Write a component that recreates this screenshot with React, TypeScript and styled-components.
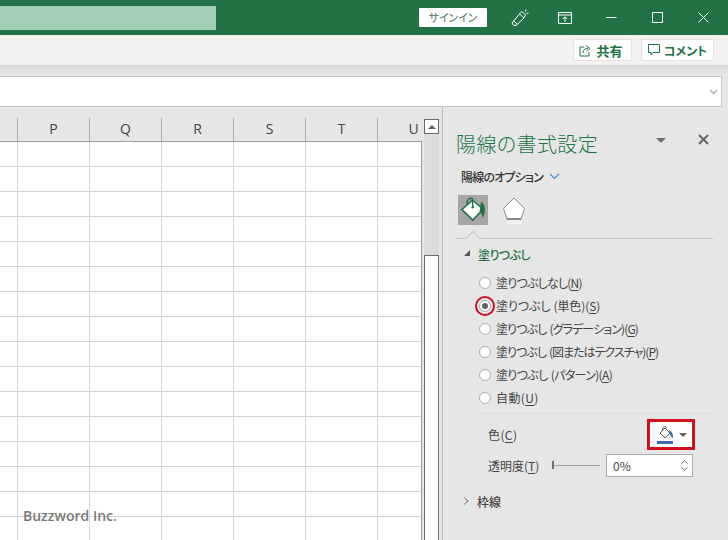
import React from "react";
import styled, { createGlobalStyle } from "styled-components";

const Global = createGlobalStyle`
  html, body { margin: 0; padding: 0; background: #e6e6e6; }
  * { box-sizing: border-box; }
  body { font-family: "Noto Sans CJK JP", "Noto Sans", sans-serif; font-feature-settings: "palt"; }
`;

const Page = styled.div`
  position: relative; width: 728px; height: 540px; overflow: hidden;
  display: flex; flex-direction: column; background: #e6e6e6; color: #444;
`;
const TitleBar = styled.div`
  height: 35px; flex: none; background: #217346; display: flex; align-items: flex-start;
`;
const SearchBox = styled.div`width: 216px; height: 24px; margin-top: 6px; background: #a3cfb4;`;
const SignIn = styled.div`
  width: 68px; height: 19px; margin: 8px 0 0 203px; background: #fff; border-radius: 1px;
  font-size: 11px; line-height: 19px; text-align: center; color: #4a7560; letter-spacing: -.1px;
`;
const WinIcon = styled.div<{ $w: number; $pad?: number }>`
  width: ${p => p.$w}px; height: 35px; flex: none; display: flex; align-items: center; justify-content: center;
  padding-left: ${p => p.$pad ?? 0}px;
`;
const RibbonBar = styled.div`
  height: 30px; flex: none; background: #f3f2f1; display: flex; justify-content: flex-end; align-items: flex-start;
  padding: 4px 14px 0 0; gap: 9px;
`;
const RibbonButton = styled.div<{ $w: number; $size: number; $pr?: number }>`
  width: ${p => p.$w}px; height: 22px; background: #fff; border: 1px solid #e4e3e2; border-radius: 2px;
  display: flex; align-items: center; justify-content: center; gap: 4px;
  font-size: ${p => p.$size}px; font-weight: 700; color: #217346; padding-right: ${p => p.$pr ?? 0}px;
  white-space: nowrap;
`;
const Shadow = styled.div`
  height: 11px; flex: none; background: linear-gradient(#d6d6d6, #e6e6e6 80%);
`;
const FormulaBar = styled.div`
  height: 31px; flex: none; background: #fff; margin-right: 6px;
  border-top: 1px solid #c6c6c6; border-bottom: 1px solid #c6c6c6; border-right: 1px solid #c6c6c6;
  display: flex; align-items: center; justify-content: flex-end; padding-right: 3px;
`;
const Main = styled.div`flex: 1; display: flex; min-height: 0;`;
const Sheet = styled.div`width: 422px; flex: none; padding-top: 11px; overflow: hidden;`;
const HeadRow = styled.div`display: flex; height: 23px; overflow: hidden;`;
const ColHead = styled.div<{ $w: number }>`
  width: ${p => p.$w}px; flex: none; text-align: center; border-right: 1px solid #ababab;
  font-family: "Open Sans", sans-serif; font-size: 14px; line-height: 22px; color: #444;
`;
const Grid = styled.div`
  display: grid; grid-template-columns: 18px repeat(5, 72px) 43px; grid-auto-rows: 25px;
  background: #fff; border-top: 1px solid #9c9c9c; border-right: 1px solid #9c9c9c; height: 410px; overflow: hidden;
  width: 422px;
`;
const Cell = styled.div`border-right: 1px solid #d4d4d4; border-bottom: 1px solid #d4d4d4;`;
const LastCell = styled.div`border-bottom: 1px solid #d4d4d4;`;
const Scrollbar = styled.div`
  width: 15px; flex: none; margin: 12px 0 0 2px; background: #dcdcdc; display: flex; flex-direction: column;
  justify-content: space-between;
`;
const ScrollBtn = styled.div`
  height: 15px; background: #fff; border: 1px solid #6a6a6a; display: flex; align-items: center; justify-content: center;
`;
const UpTri = styled.div`
  width: 0; height: 0; border-left: 4px solid transparent; border-right: 4px solid transparent; border-bottom: 4px solid #606060;
`;
const Thumb = styled.div`height: 285px; background: #fff; border: 1px solid #6a6a6a; border-bottom: 0;`;
const Pane = styled.div`
  margin-left: 3px; flex: 1; border-left: 1px solid #b8b8b8; background: #e6e6e6; display: flex; flex-direction: column;
  padding: 22px 0 0 13px;
`;
const PaneHead = styled.div`display: flex; align-items: center; height: 30px; padding-right: 19px;`;
const PaneTitle = styled.div`
  font-size: 20px; font-weight: 300; color: #217346; line-height: 30px; letter-spacing: .4px; flex: 1; white-space: nowrap;
`;
const MenuTri = styled.div`
  width: 0; height: 0; border-left: 5px solid transparent; border-right: 5px solid transparent;
  border-top: 5px solid #6f6f6f; margin-right: 32px; margin-top: -8px;
`;
const CloseWrap = styled.div`margin-top: -9px; height: 12px; display: flex;`;
const OptionRow = styled.div`
  display: flex; align-items: center; gap: 6px; margin: 9px 0 0 5px; height: 17px; font-size: 12px; font-weight: 500; color: #333;
  letter-spacing: -.8px;
`;
const IconRow = styled.div`display: flex; align-items: center; margin: 10px 0 0 2px; gap: 11px;`;
const IconTab = styled.div<{ $on?: boolean }>`
  width: 30px; height: 30px; background: ${p => (p.$on ? "#a6a6a6" : "transparent")};
  display: flex; align-items: center; justify-content: center;
`;
const TabRule = styled.div`
  position: relative; height: 1px; background: #c4c4c4; margin: 13px 15px 0 0;
  &::before {
    content: ""; position: absolute; left: 12px; top: -5px; width: 9px; height: 9px; transform: rotate(45deg);
    background: #e6e6e6; border-left: 1px solid #c4c4c4; border-top: 1px solid #c4c4c4;
  }
`;
const Section = styled.div<{ $green?: boolean }>`
  display: flex; align-items: center; height: 18px; font-size: 12px; font-weight: 500;
  padding-left: 8px; gap: 8px; color: ${p => (p.$green ? "#217346" : "#444")}; letter-spacing: -.6px;
`;
const OpenTri = styled.div`
  width: 0; height: 0; border-bottom: 6px solid #555; border-left: 6px solid transparent; margin-top: -3px;
`;
const ClosedTri = styled.div`
  width: 0; height: 0; position: relative; border-left: 5px solid #8a8a8a; border-top: 4.5px solid transparent; border-bottom: 4.5px solid transparent;
  &::after {
    content: ""; position: absolute; left: -5px; top: -3px; width: 0; height: 0;
    border-left: 3.5px solid #e6e6e6; border-top: 3px solid transparent; border-bottom: 3px solid transparent;
  }
`;
const RadioList = styled.div`display: flex; flex-direction: column; margin: 8px 0 0 23px;`;
const RadioRow = styled.div<{ $sp: number }>`
  height: 23px; display: flex; align-items: center; gap: 5px; font-size: 12px; color: #444; white-space: nowrap;
  letter-spacing: ${p => p.$sp}px;
`;
const Radio = styled.div<{ $on?: boolean; $mark?: boolean }>`
  position: relative; width: 12px; height: 12px; border-radius: 50%; background: #fff; border: 1px solid #ababab;
  flex: none; display: flex; align-items: center; justify-content: center;
  &::before {
    content: ""; width: 6px; height: 6px; border-radius: 50%; background: #606060; display: ${p => (p.$on ? "block" : "none")};
  }
  &::after {
    content: ""; box-sizing: border-box; position: absolute; left: -5px; top: -5px; width: 20px; height: 20px; border-radius: 50%;
    border: 2.5px solid #c8101f; display: ${p => (p.$mark ? "block" : "none")};
  }
`;
const Spaced = styled.span`margin-left: 3px;`;
const U = styled.span`text-decoration: underline; text-underline-offset: 2px;`;
const ThinRule = styled.div`height: 1px; background: #dcdcdc; margin: 4px 15px 0 24px;`;
const PropRow = styled.div`
  display: flex; align-items: center; font-size: 12px; margin-left: 32px; padding-right: 35px; color: #444;
`;
const PropLabel = styled.div`width: 64px; flex: none; white-space: nowrap;`;
const ColorRow = styled(PropRow)`justify-content: space-between; height: 27px; margin-top: 7px; letter-spacing: .4px;`;
const ColorBtn = styled.div`
  position: relative; width: 44px; height: 27px; background: #fff; border: 1px solid #ababab;
  display: flex; align-items: center; padding-left: 7px; gap: 4px;
  &::after { content: ""; position: absolute; inset: -3px; border: 3px solid #d0101c; }
`;
const DropTri = styled.div`
  width: 0; height: 0; border-left: 4px solid transparent; border-right: 4px solid transparent; border-top: 4px solid #606060;
`;
const TransRow = styled(PropRow)`height: 23px; margin-top: 6px;`;
const Slider = styled.div`
  width: 48px; height: 1px; background: #a0a0a0; position: relative; flex: none; margin-right: 6px;
  &::before { content: ""; position: absolute; left: 0; top: -4px; width: 2px; height: 8px; background: #707070; }
`;
const Spin = styled.div`
  width: 87px; height: 23px; background: #fff; border: 1px solid #ababab; display: flex; align-items: center;
  justify-content: space-between; padding: 0 4px 0 6px; font-size: 12px; flex: none;
`;
const SpinArrows = styled.div`display: flex; flex-direction: column; gap: 3px;`;
const Border = styled(Section)`margin-top: 15px; letter-spacing: 0;`;
const Watermark = styled.div`
  position: absolute; left: 23px; top: 506px; font-family: "Open Sans", sans-serif; font-size: 14px; font-weight: 600;
  color: rgba(90, 90, 90, .82); line-height: 20px;
`;

const heads: [string, number][] = [["", 18], ["P", 72], ["Q", 72], ["R", 72], ["S", 72], ["T", 72], ["U", 72]];
const radios: { a: string; t?: string; k: string; sp: number; on?: boolean }[] = [
  { a: "塗りつぶしなし", k: "N", sp: -0.8 },
  { a: "塗りつぶし", t: "(単色)", k: "S", sp: -0.1, on: true },
  { a: "塗りつぶし", t: "(グラデーション)", k: "G", sp: -0.9 },
  { a: "塗りつぶし", t: "(図またはテクスチャ)", k: "P", sp: -1 },
  { a: "塗りつぶし", t: "(パターン)", k: "A", sp: -0.65 },
  { a: "自動", k: "U", sp: 0.4 },
];

export default function App() {
  return (
    <Page>
      <Global />
      <TitleBar>
        <SearchBox />
        <SignIn>サインイン</SignIn>
        <WinIcon $w={65}>
          <svg width="18" height="18" viewBox="0 0 18 18" fill="none" stroke="#fff" strokeWidth="1">
            <path d="M1 14L8.500 5 13 9 5 16.500Q2 17 1 14Z M3 12L6.500 15.500 M8.500 5L11 2.500 14.500 6 13 9 M15 .5L14.500 2.500 M17.500 4L15.500 4.500" />
          </svg>
        </WinIcon>
        <WinIcon $w={26}>
          <svg width="14" height="12" viewBox="0 0 14 12" fill="none" stroke="#fff" strokeWidth="1">
            <path d="M.5 .5H13.500V11.500H.5Z M.5 3H13.500 M7 10V5 M4.800 7L7 4.800 9.200 7" />
          </svg>
        </WinIcon>
        <WinIcon $w={46} $pad={21}>
          <svg width="11" height="11" viewBox="0 0 11 11" fill="none" stroke="#fff" strokeWidth="1"><path d="M0 5.500H10.500" /></svg>
        </WinIcon>
        <WinIcon $w={46} $pad={21}>
          <svg width="11" height="11" viewBox="0 0 11 11" fill="none" stroke="#fff" strokeWidth="1"><path d="M.5 .5H10.500V10.500H.5Z" /></svg>
        </WinIcon>
        <WinIcon $w={46} $pad={21}>
          <svg width="11" height="11" viewBox="0 0 11 11" fill="none" stroke="#fff" strokeWidth="1"><path d="M.5 .5L10.500 10.500M10.500 .5L.5 10.500" /></svg>
        </WinIcon>
      </TitleBar>
      <RibbonBar>
        <RibbonButton $w={59} $size={13} $pr={3}>
          <svg width="13" height="13" viewBox="0 0 13 13" fill="none" stroke="#217346" strokeWidth="1">
            <path d="M5 3H1V12H10V8 M4 9C4 6 6 4.500 9 4.500 M7 1.500L11 4.500 7.500 7.500" />
          </svg>
          共有
        </RibbonButton>
        <RibbonButton $w={73} $size={12}>
          <svg width="12" height="12" viewBox="0 0 12 12" fill="none" stroke="#217346" strokeWidth="1">
            <path d="M.5 .5H11.500V8.500H5L3 11V8.500H.5Z" />
          </svg>
          コメント
        </RibbonButton>
      </RibbonBar>
      <Shadow />
      <FormulaBar>
        <svg width="9" height="6" viewBox="0 0 9 6" fill="none" stroke="#b8b8b8" strokeWidth="1.6"><path d="M1 1L4.500 4.500 8 1" /></svg>
      </FormulaBar>
      <Main>
        <Sheet>
          <HeadRow>
            {heads.map(([h, w], i) => (
              <ColHead key={i} $w={w}>{h}</ColHead>
            ))}
          </HeadRow>
          <Grid>
            {Array.from({ length: 17 * 7 }).map((_, i) => (i % 7 === 6 ? <LastCell key={i} /> : <Cell key={i} />))}
          </Grid>
        </Sheet>
        <Scrollbar>
          <ScrollBtn><UpTri /></ScrollBtn>
          <Thumb />
        </Scrollbar>
        <Pane>
          <PaneHead>
            <PaneTitle>陽線の書式設定</PaneTitle>
            <MenuTri />
            <CloseWrap>
              <svg width="11" height="11" viewBox="0 0 11 11" fill="none" stroke="#666" strokeWidth="2"><path d="M1 1L10 10M10 1L1 10" /></svg>
            </CloseWrap>
          </PaneHead>
          <OptionRow>
            陽線のオプション
            <svg width="11" height="7" viewBox="0 0 11 7" fill="none" stroke="#4a8fd0" strokeWidth="1.2"><path d="M1 1L5.500 5.500 10 1" /></svg>
          </OptionRow>
          <IconRow>
            <IconTab $on>
              <svg width="30" height="30" viewBox="0 0 30 30" fill="none">
                <path d="M14.700 5L25 14.500 14.700 25 4 14.500Z" fill="#fff" stroke="#217346" strokeWidth="1.6" />
                <path d="M8.700 9C9 4 12 2.500 14 3.500 15 4 14.700 6 14.700 12" stroke="#217346" strokeWidth="1.4" />
                <circle cx="14.700" cy="12.300" r="1.200" fill="#217346" />
                <path d="M23 6.700C27 9 29 16 24.300 23.500C24.500 20 23.500 18 21.500 17Z" fill="#217346" />
              </svg>
            </IconTab>
            <IconTab>
              <svg width="26" height="30" viewBox="0 0 26 30" fill="none">
                <path d="M13 3L23.500 13.500 20 24H6L2.500 13.500Z" fill="#fff" stroke="#8a8a8a" strokeWidth="1" />
                <path d="M6 24L20 24" stroke="#666" strokeWidth="1.200" />
                <path d="M5 29L7 25H19L21 29Z" fill="#f0f0f0" />
              </svg>
            </IconTab>
          </IconRow>
          <TabRule />
          <Section $green style={{ marginTop: 6 }}>
            <OpenTri />
            塗りつぶし
          </Section>
          <RadioList>
            {radios.map(r => (
              <RadioRow key={r.k} $sp={r.sp}>
                <Radio $on={r.on} $mark={r.on} />
                <span>
                  {r.a}
                  {r.t && <Spaced>{r.t}</Spaced>}(<U>{r.k}</U>)
                </span>
              </RadioRow>
            ))}
          </RadioList>
          <ThinRule />
          <ColorRow>
            <span>色(<U>C</U>)</span>
            <ColorBtn>
              <svg width="18" height="20" viewBox="0 0 18 20" fill="none">
                <path d="M8 3L13 8 8 13 3 8Z" fill="#fff" stroke="#555" strokeWidth="1" />
                <path d="M5.500 5C5.500 1.500 9 .5 9.500 3" stroke="#555" strokeWidth="1" />
                <path d="M12 5C16 7 16.500 11 15.500 13.500L13.500 10.500Z" fill="#2f6fa8" />
                <rect x="0" y="16" width="16" height="3" fill="#3f6cb0" />
              </svg>
              <DropTri />
            </ColorBtn>
          </ColorRow>
          <TransRow>
            <PropLabel>透明度(<U>T</U>)</PropLabel>
            <Slider />
            <Spin>
              0%
              <SpinArrows>
                <svg width="7" height="4" viewBox="0 0 7 4" fill="none" stroke="#777"><path d="M.5 3.500L3.500 .8 6.500 3.500" /></svg>
                <svg width="7" height="4" viewBox="0 0 7 4" fill="none" stroke="#777"><path d="M.5 .5L3.500 3.200 6.500 .5" /></svg>
              </SpinArrows>
            </Spin>
          </TransRow>
          <Border>
            <ClosedTri />
            枠線
          </Border>
        </Pane>
      </Main>
      <Watermark>Buzzword Inc.</Watermark>
    </Page>
  );
}
